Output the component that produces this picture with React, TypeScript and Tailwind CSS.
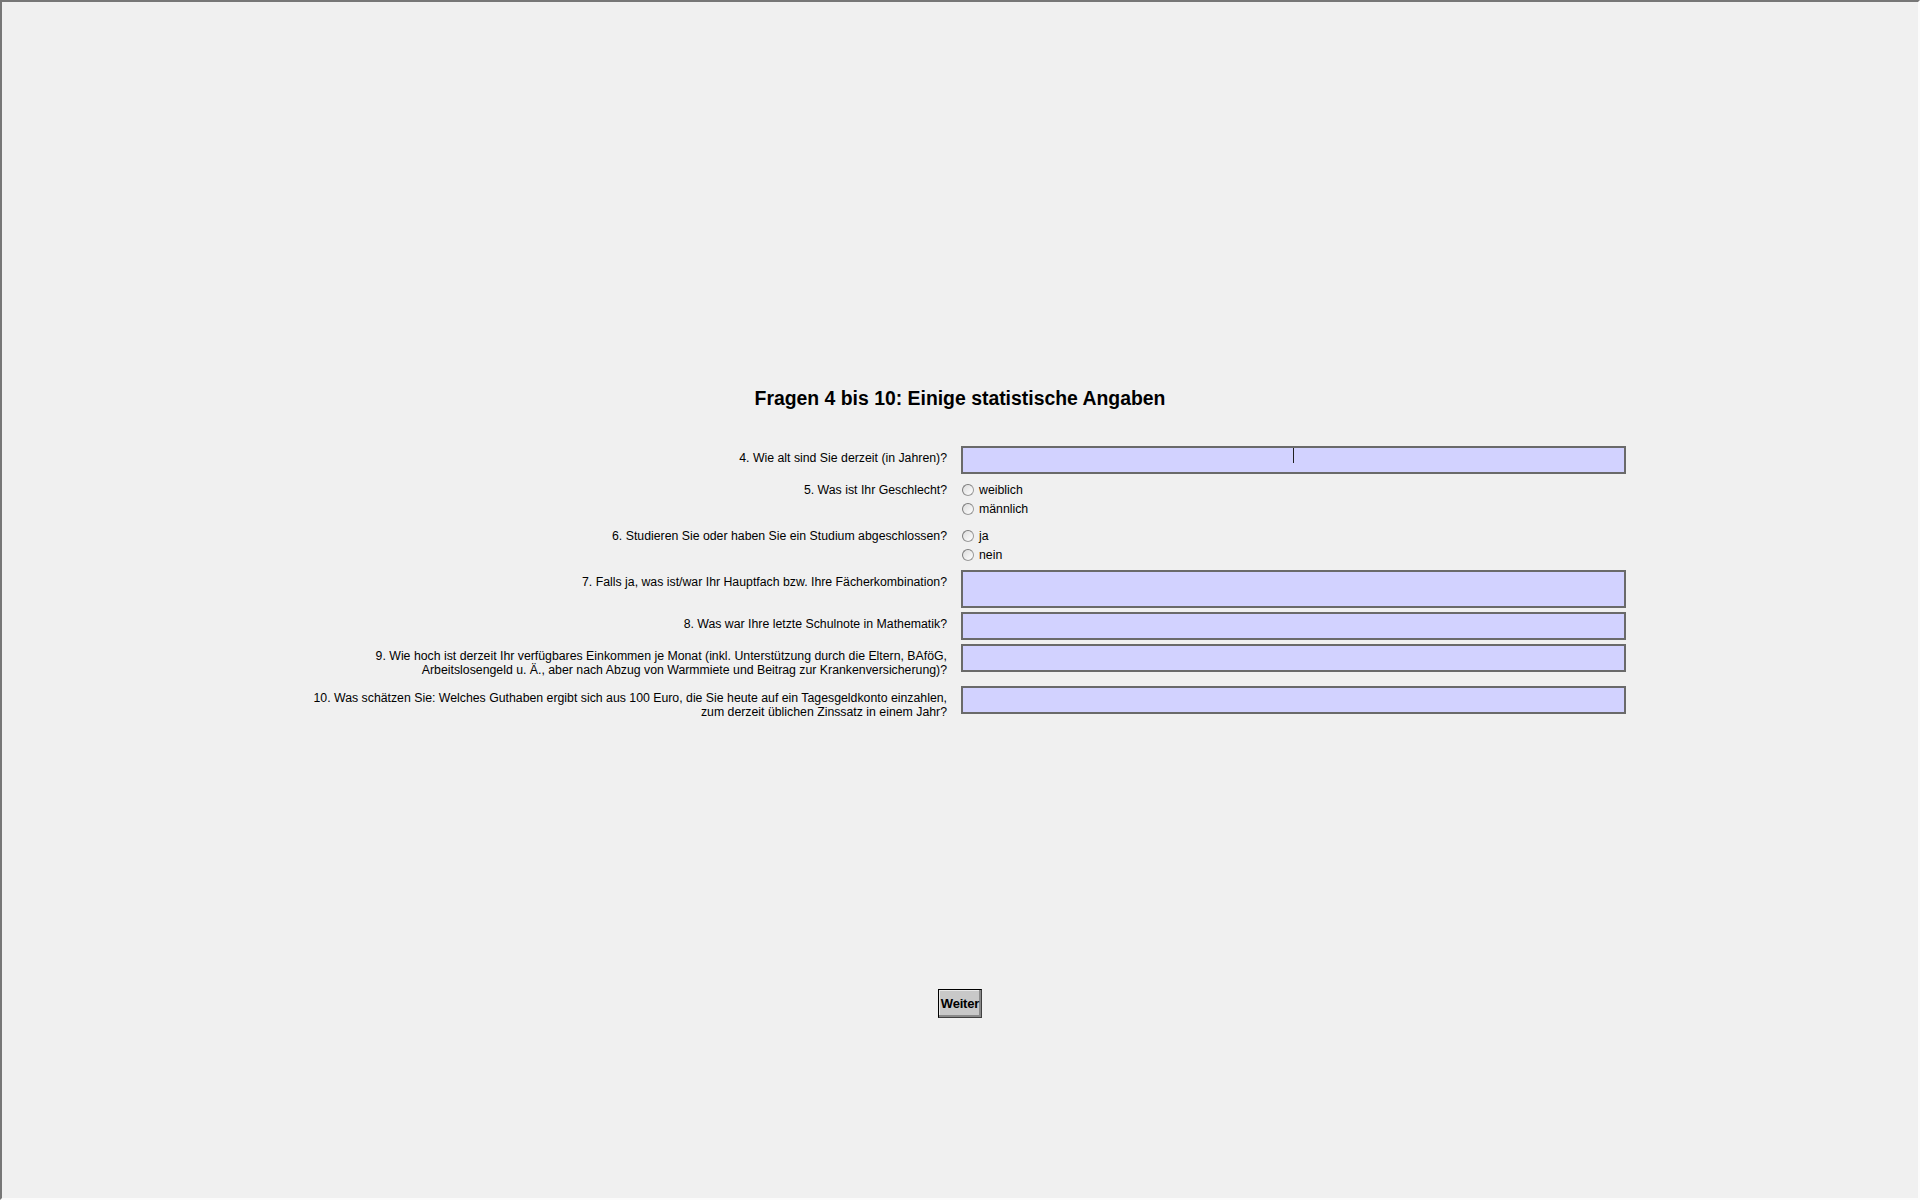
import React from "react";

const font = { fontFamily: '"Liberation Sans", Arial, sans-serif' };

function Box({ tall, caret }: { tall?: boolean; caret?: boolean }) {
  return (
    <div
      className={`relative w-[665px] ${tall ? "h-[38px]" : "h-[28px]"} border-2 border-[#6a6a6a] bg-[#d2d2ff]`}
    >
      {caret && <div className="absolute left-[330px] top-[0px] h-[15px] w-px bg-[#202020]" />}
    </div>
  );
}

function Radio({ label }: { label: string }) {
  return (
    <div className="flex h-[19px] items-center">
      <span className="ml-[1px] inline-block h-[12px] w-[12px] rounded-full border border-[#9a9a9a] border-t-[#7c7c7c] border-l-[#7c7c7c] bg-[linear-gradient(135deg,#dcdcdc,#ffffff)]" />
      <span className="ml-[5px] text-[12.3px] leading-[14px] text-black">{label}</span>
    </div>
  );
}

function Label({ children }: { children: React.ReactNode }) {
  return (
    <div className="whitespace-nowrap py-[5px] text-right text-[12.3px] leading-[14px] text-black">
      {children}
    </div>
  );
}

export default function App() {
  return (
    <div
      style={font}
      className="h-[1200px] w-[1920px] overflow-hidden border-t-2 border-l-2 border-r-2 border-b-2 border-t-[#777777] border-l-[#777777] border-r-[#fbfbfb] border-b-[#fbfbfb] bg-[#f0f0f0]"
    >
      <div className="pt-[384px]">
        <h1 className="text-center text-[19.4px] font-bold leading-[24px] text-black">
          Fragen 4 bis 10: Einige statistische Angaben
        </h1>
        <div className="ml-[305px] mt-[36px] grid grid-cols-[640px_665px] gap-x-[14px] gap-y-[4px]">
          <Label>4. Wie alt sind Sie derzeit (in Jahren)?</Label>
          <Box caret />

          <Label>5. Was ist Ihr Geschlecht?</Label>
          <div className="py-[2px]">
            <Radio label="weiblich" />
            <Radio label="männlich" />
          </div>

          <Label>6. Studieren Sie oder haben Sie ein Studium abgeschlossen?</Label>
          <div className="py-[2px]">
            <Radio label="ja" />
            <Radio label="nein" />
          </div>

          <Label>7. Falls ja, was ist/war Ihr Hauptfach bzw. Ihre Fächerkombination?</Label>
          <Box tall />

          <Label>8. Was war Ihre letzte Schulnote in Mathematik?</Label>
          <Box />

          <Label>
            9. Wie hoch ist derzeit Ihr verfügbares Einkommen je Monat (inkl. Unterstützung durch die Eltern, BAföG,
            <br />
            Arbeitslosengeld u. Ä., aber nach Abzug von Warmmiete und Beitrag zur Krankenversicherung)?
          </Label>
          <Box />

          <Label>
            10. Was schätzen Sie: Welches Guthaben ergibt sich aus 100 Euro, die Sie heute auf ein Tagesgeldkonto einzahlen,
            <br />
            zum derzeit üblichen Zinssatz in einem Jahr?
          </Label>
          <Box />
        </div>
        <div className="mt-[265px] flex justify-center">
          <button className="h-[29px] w-[44px] border border-t-black border-l-black border-r-[#404040] border-b-[#404040] bg-[#c8c8c8] p-0 text-[13px] font-bold leading-[14px] tracking-[-0.2px] text-black shadow-[inset_-2px_-2px_0_#8a8a8a,inset_1px_1px_0_#e8e8e8]">
            Weiter
          </button>
        </div>
      </div>
    </div>
  );
}
